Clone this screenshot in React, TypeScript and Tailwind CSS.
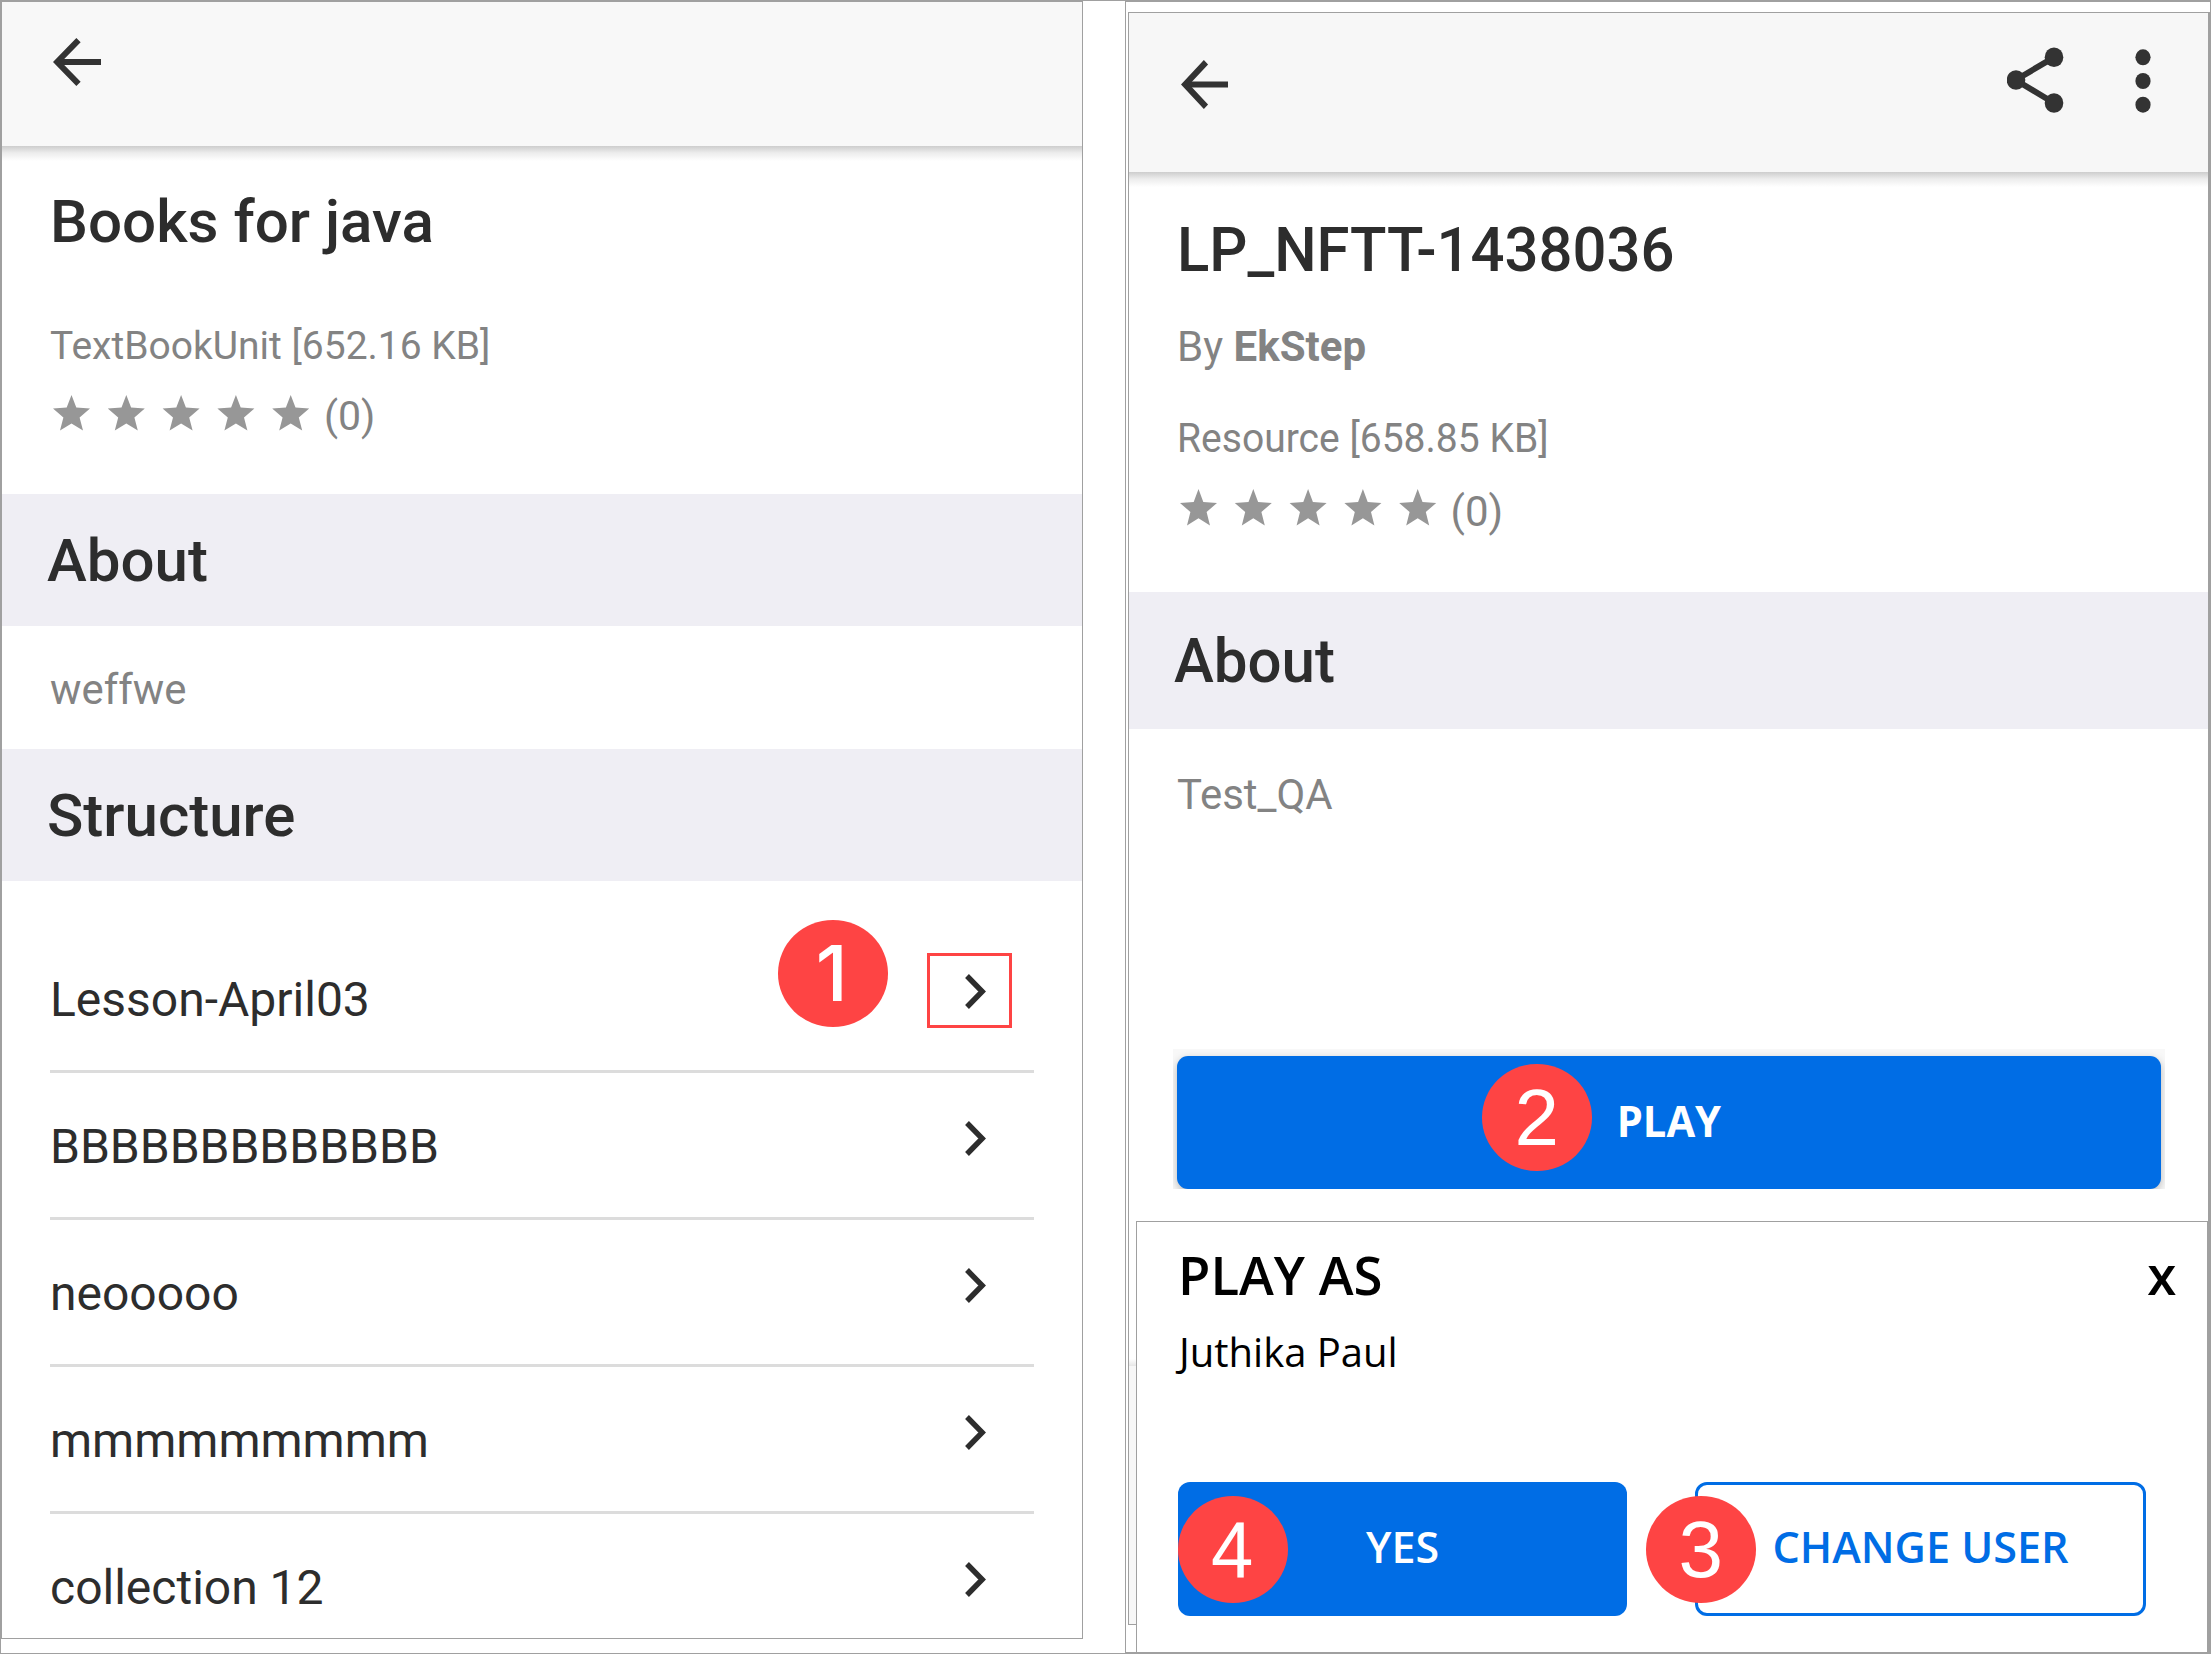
import type { ReactNode } from "react";

const lessons = ["Lesson-April03", "BBBBBBBBBBBBB", "neooooo", "mmmmmmmmm", "collection 12"];

function HeaderShadow() {
  return (
    <div className="absolute inset-x-0 top-full h-[15px] bg-linear-to-b from-[#cdcdcd] via-[#ececec] via-45% to-white" />
  );
}

function BackArrow({ className }: { className: string }) {
  return (
    <svg viewBox="0 0 48 48" preserveAspectRatio="none" fill="none" stroke="#333" strokeWidth="6" className={className}>
      <path d="M48 24H6" />
      <path d="M25.5 2.2L4.2 24L25.5 45.8" />
    </svg>
  );
}

function Stars({ className }: { className: string }) {
  return (
    <svg viewBox="0 0 257 36" preserveAspectRatio="none" fill="#979797" className={className}>
      {[0, 54.8, 109.6, 164.4, 219.2].map((x) => (
        <path
          key={x}
          transform={`translate(${x} 0)`}
          d="M18.5 0L23.3 12.6L37 13.5L26.6 22.4L30 35.6L18.5 28.4L7 35.6L10.4 22.4L0 13.5L13.7 12.6Z"
        />
      ))}
    </svg>
  );
}

function Chevron() {
  return (
    <svg viewBox="0 0 21 35" fill="none" stroke="#2d2d2d" strokeWidth="5.4" className="mt-12 h-[35px] w-[21px]">
      <path d="M2 2L17.2 17.5L2 33" />
    </svg>
  );
}

function Badge({ className, children }: { className: string; children: ReactNode }) {
  return (
    <div
      className={`absolute flex h-[107px] w-[110.5px] items-center justify-center rounded-[50%] bg-[#fe4444] font-['Liberation_Sans',sans-serif] text-[80px] leading-[89px] font-normal text-white ${className}`}
    >
      {children}
    </div>
  );
}

function BookPanel() {
  return (
    <section className="mt-px flex h-[1638px] w-[1082px] flex-col overflow-hidden border border-[#a0a0a0] font-['Roboto',sans-serif] text-[#2d2d2d]">
      <header className="relative h-[144px] shrink-0 bg-[#f8f8f8] pt-[36px] pl-[51px]">
        <BackArrow className="h-12 w-12" />
        <HeaderShadow />
      </header>

      <div className="h-[348px] shrink-0 pt-[40px] pl-12 text-[#838383]">
        <h1 className="h-[71px] text-[60px] leading-[71px] font-medium text-[#2d2d2d]">
          <span className="inline-block origin-left scale-x-[1.002]">Books for java</span>
        </h1>
        <p className="mt-[66px] text-[39px] leading-[46px]">TextBookUnit [652.16 KB]</p>
        <div className="mt-[23px] flex h-12">
          <Stars className="mt-[3px] ml-[3px] h-9 w-[257px]" />
          <span className="ml-[14px] text-[41px] leading-[48px]">(0)</span>
        </div>
      </div>

      <h2 className="h-[132px] shrink-0 bg-[#efeef4] pt-[31px] pl-[45px] text-[60px] leading-[71px] font-medium">About</h2>
      <p className="h-[123px] shrink-0 pt-[38px] pl-12 text-[43px] leading-[50px] text-[#838383]">
        <span className="inline-block origin-left scale-x-[0.973]">weffwe</span>
      </p>
      <h2 className="h-[132px] shrink-0 bg-[#efeef4] pt-[31px] pl-[45px] text-[60px] leading-[71px] font-medium">Structure</h2>

      <ul className="mt-[45px] pr-12 pl-12">
        {lessons.map((name, i) => (
          <li key={name} className="relative flex h-[147px] justify-between border-b-[3px] border-[#dcdcdc] pr-12">
            <span className="pt-[45px] text-[48px] leading-[57px]">{name}</span>
            {i === 0 && (
              <>
                <Badge className="-top-[6.5px] left-[727.5px]">
                  <span className="-ml-0.5 font-['Inter',sans-serif] text-[77px] leading-[94px] font-medium">1</span>
                </Badge>
                <div className="absolute top-[27px] left-[877px] h-[75px] w-[85px] border-[3px] border-[#fe4444]" />
              </>
            )}
            <Chevron />
          </li>
        ))}
      </ul>
    </section>
  );
}

function ResourcePanel() {
  return (
    <section className="mt-[10px] ml-[2px] flex h-[1613px] flex-col border border-r-2 border-[#a0a0a0] font-['Roboto',sans-serif] text-[#2d2d2d]">
      <header className="relative flex h-[159px] shrink-0 bg-[#f7f7f7] pl-[52px]">
        <BackArrow className="mt-[47px] h-[49px] w-[47px]" />
        <svg viewBox="0 0 57 66" stroke="#333" strokeWidth="6" className="mt-[34px] ml-[779px] h-[66px] w-[57px]">
          <path d="M47 10.3L8.7 33L47 56" fill="none" />
          <g fill="#333" stroke="none">
            <ellipse cx="47" cy="10.3" rx="9.3" ry="9.8" />
            <ellipse cx="9" cy="33" rx="9.3" ry="9.8" />
            <ellipse cx="47" cy="56" rx="9.3" ry="9.8" />
          </g>
        </svg>
        <svg viewBox="0 0 16 66" fill="#333" className="mt-[34px] ml-[71px] h-[66px] w-4">
          <ellipse cx="8" cy="10.3" rx="7.6" ry="8" />
          <ellipse cx="8" cy="34" rx="7.6" ry="8" />
          <ellipse cx="8" cy="57.7" rx="7.6" ry="8" />
        </svg>
        <HeaderShadow />
      </header>

      <div className="h-[420px] shrink-0 pt-[42px] pl-12 text-[#838383]">
        <h1 className="h-[72px] text-[61px] leading-[72px] font-medium text-[#2d2d2d]">
          <span className="inline-block origin-left scale-x-[0.98]">LP_NFTT-1438036</span>
        </h1>
        <p className="mt-[35px] text-[43px] leading-[50px]">
          <span className="inline-block origin-left scale-x-[0.978]">
            By <b className="font-bold">EkStep</b>
          </span>
        </p>
        <p className="mt-[44px] text-[40px] leading-[47px]">
          <span className="inline-block origin-left scale-x-[0.976]">Resource [658.85 KB]</span>
        </p>
        <div className="mt-[25px] flex h-[49px]">
          <Stars className="mt-[2px] ml-[3px] h-[37px] w-[257px]" />
          <span className="ml-[13.5px] text-[42px] leading-[49px]">(0)</span>
        </div>
      </div>

      <h2 className="h-[137px] shrink-0 bg-[#efeef4] pt-[33px] pl-[45px] text-[61px] leading-[72px] font-medium">
        <span className="inline-block origin-left scale-x-[0.984]">About</span>
      </h2>
      <p className="h-[320px] shrink-0 pt-[40px] pl-12 text-[43px] leading-[50px] text-[#838383]">
        <span className="inline-block origin-left scale-x-[0.975]">Test_QA</span>
      </p>

      <div className="ml-[44px] h-[140px] w-[992px] shrink-0 overflow-hidden bg-[#f8f8f8] pt-[7px]">
        <button className="relative mx-1 flex h-[133px] w-[984px] justify-center rounded-[11px] bg-[#006de5] pt-[35px] font-['Open_Sans',sans-serif] text-[43px] leading-[59px] font-bold text-white shadow-[0_3px_8px_rgba(0,0,0,0.25)]">
          <span className="scale-x-[0.968]">PLAY</span>
          <Badge className="top-[7.5px] left-[304.5px]">2</Badge>
        </button>
      </div>

      <div className="mt-[170px] h-[7px] shrink-0 bg-linear-to-b from-white to-[#e6e6e6]" />
      <div className="flex-1 bg-[#f7f7f7]" />
    </section>
  );
}

function PlayAsDialog() {
  return (
    <div className="absolute top-[1219px] left-[10px] h-[431px] w-[1074px] border-t border-r-[3px] border-l border-[#a0a0a0] bg-white pt-4 pl-[41px] font-['Open_Sans',sans-serif] text-black">
      <div className="flex h-[73px] justify-between pr-[31px] text-[53px] leading-[73px] font-semibold">
        <span className="origin-left scale-x-[0.994]">PLAY AS</span>
        <span className="-mt-px origin-right scale-x-[0.96] text-[55px]">x</span>
      </div>
      <p className="mt-[13px] pl-px text-[40px] leading-[55px]">Juthika Paul</p>
      <div className="mt-[103px] flex gap-[68px] text-[43px] leading-[59px] font-semibold">
        <button className="relative flex h-[134px] w-[449px] justify-center rounded-[12px] bg-[#006de5] pt-[35px] text-white">
          YES
          <Badge className="top-[13.5px] -left-[0.5px]">
            <span className="-ml-px scale-x-[0.95]">4</span>
          </Badge>
        </button>
        <button className="relative flex h-[134px] w-[451px] justify-center rounded-[12px] border-[3px] border-[#006de5] pt-[32px] text-[#006de5]">
          <span className="scale-x-[1.004]">CHANGE USER</span>
          <Badge className="top-[10.5px] -left-[52.5px]">3</Badge>
        </button>
      </div>
    </div>
  );
}

export default function App() {
  return (
    <main className="flex h-[1654px] w-[2211px] overflow-hidden bg-white">
      <div className="w-[1125px] border-t border-b border-l border-[#a0a0a0]">
        <div className="-mt-px">
          <BookPanel />
        </div>
      </div>
      <div className="relative w-[1086px] border-y-2 border-r border-l border-[#a0a0a0]">
        <ResourcePanel />
        <PlayAsDialog />
      </div>
    </main>
  );
}
